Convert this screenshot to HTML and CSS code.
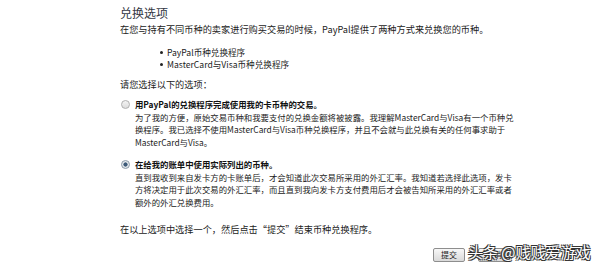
FILE: index.html
```html
<!DOCTYPE html>
<html lang="zh-CN">

<head>
    <meta charset="UTF-8">
    <title>兑换选项</title>
    <link rel="stylesheet" href="styles.css">
</head>

<body>

    <div class="page">
        <h1 class="title">兑换选项</h1>
        <p class="intro">在您与持有不同币种的卖家进行购买交易的时候，PayPal提供了两种方式来兑换您的币种。</p>

        <ul class="methods">
            <li>PayPal币种兑换程序</li>
            <li>MasterCard与Visa币种兑换程序</li>
        </ul>

        <p class="choose">请您选择以下的选项：</p>

        <div class="option">
            <span class="radio"></span>
            <div class="optionText">
                <div class="optionTitle">用PayPal的兑换程序完成使用我的卡币种的交易。</div>
                <div class="optionDesc">为了我的方便，原始交易币种和我要支付的兑换金额将被披露。我理解MasterCard与Visa有一个币种兑<br>换程序。我已选择不使用MasterCard与Visa币种兑换程序，并且不会就与此兑换有关的任何事求助于<br>MasterCard与Visa。</div>
            </div>
        </div>

        <div class="option">
            <span class="radio checked"></span>
            <div class="optionText">
                <div class="optionTitle">在给我的账单中使用实际列出的币种。</div>
                <div class="optionDesc">直到我收到来自发卡方的卡账单后，才会知道此次交易所采用的外汇汇率。我知道若选择此选项，发卡<br>方将决定用于此次交易的外汇汇率，而且直到我向发卡方支付费用后才会被告知所采用的外汇汇率或者<br>额外的外汇兑换费用。</div>
            </div>
        </div>

        <p class="final">在以上选项中选择一个，然后点击“提交”结束币种兑换程序。</p>

        <div class="actions">
            <button>提交</button>
            <button>取消</button>
        </div>
    </div>

    <div class="watermark">头条 @贱贱爱游戏</div>

</body>

</html>
```

FILE: styles.css
```css
body {
    margin: 0;
    background-color: #ffffff;
    font-family: "Noto Sans CJK SC", "Liberation Sans", sans-serif;
    color: #222222;
}

.page {
    width: 390px;
    padding: 5px 0 0 120px;
}

.title {
    margin: 0;
    font-size: 12px;
    line-height: 16px;
    font-weight: normal;
    color: #333844;
}

.intro,
.choose,
.final {
    margin: 0;
    font-size: 9.2px;
    line-height: 12px;
}

.intro {
    margin-top: 2px;
}

.methods {
    list-style: none;
    margin: 11px 0 0 0;
    padding: 0 0 0 47px;
    font-size: 8.6px;
    line-height: 12px;
}

.methods li {
    position: relative;
}

.methods li::before {
    content: "";
    position: absolute;
    left: -7px;
    top: 5px;
    width: 3px;
    height: 3px;
    border-radius: 50%;
    background-color: #222222;
}

.choose {
    margin-top: 8px;
}

.option {
    display: flex;
    align-items: flex-start;
    margin-top: 8px;
    font-size: 8.4px;
    line-height: 12.5px;
}

.option + .option {
    margin-top: 10px;
}

.optionText {
    white-space: nowrap;
}

.radio {
    flex: none;
    width: 7px;
    height: 7px;
    margin: 2px 5px 0 1px;
    border: 1px solid #b0b0b0;
    border-radius: 50%;
    background: linear-gradient(#f4f4f4, #dcdcdc);
}

.radio.checked {
    border-color: #8a9aa8;
    background: radial-gradient(circle, #3c5a78 0, #3c5a78 1.8px, #e4e8ec 2.4px);
}

.optionTitle {
    font-weight: bold;
    color: #111111;
}

.final {
    margin-top: 15px;
}

.actions {
    display: flex;
    justify-content: flex-end;
    gap: 13px;
    margin-top: 13px;
}

.actions button {
    height: 14px;
    padding: 0 7px;
    font-family: "Noto Sans CJK SC", sans-serif;
    font-size: 8px;
    line-height: 12px;
    color: #222222;
    border: 1px solid #8e8e8e;
    border-radius: 2px;
    background: linear-gradient(#f7f7f7, #d9d9d9);
}

.watermark {
    position: absolute;
    left: 468px;
    top: 241px;
    font-size: 15px;
    line-height: 22px;
    color: #ffffff;
    text-shadow: 1px 1px 0 #333, -1px -1px 0 #333, 1px -1px 0 #333, -1px 1px 0 #333;
}
```
